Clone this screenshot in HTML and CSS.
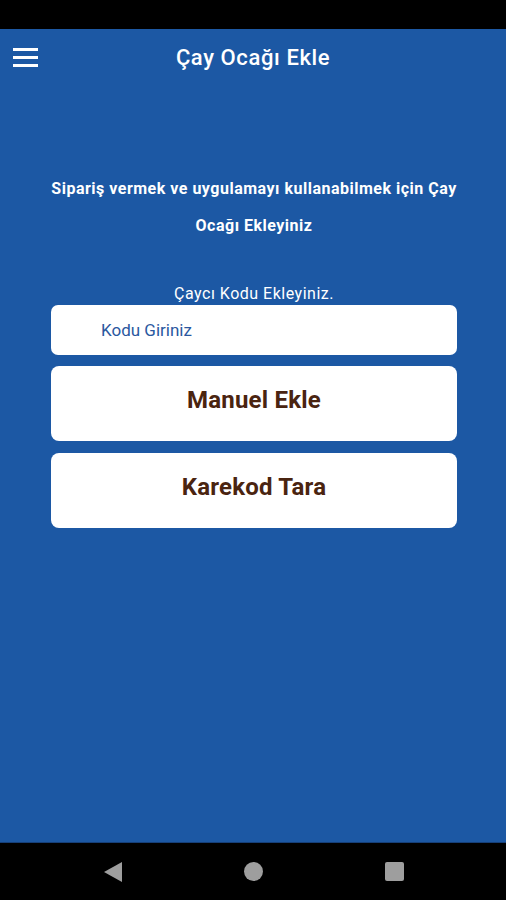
FILE: index.html
```html
<!DOCTYPE html>
<html lang="tr">
<head>
    <meta charset="UTF-8">
    <meta name="viewport" content="width=device-width, initial-scale=1.0">
    <title>Çay Ocağı Ekle</title>
    <link rel="stylesheet" href="styles.css">
</head>
<body>
    <div class="status-bar"></div>

    <div class="screen">
        <header class="toolbar">
            <button class="menu-btn" aria-label="Menü">
                <span></span><span></span><span></span>
            </button>
            <h1>Çay Ocağı Ekle</h1>
        </header>

        <main class="content">
            <p class="intro">Sipariş vermek ve uygulamayı kullanabilmek için Çay Ocağı Ekleyiniz</p>

            <label class="code-label" for="code">Çaycı Kodu Ekleyiniz.</label>
            <input id="code" class="code-input" type="text" placeholder="Kodu Giriniz">

            <button class="action-btn">Manuel Ekle</button>
            <button class="action-btn">Karekod Tara</button>
        </main>
    </div>

    <nav class="nav-bar">
        <span class="nav-back"></span>
        <span class="nav-home"></span>
        <span class="nav-recent"></span>
    </nav>
</body>
</html>
```

FILE: styles.css
```css
body {
    margin: 0;
    padding: 0;
    height: 100vh;
    display: flex;
    flex-direction: column;
    background: #000;
    font-family: Roboto, "Noto Sans", sans-serif;
    overflow: hidden;
}

.status-bar {
    height: 29px;
    background: #000;
    flex-shrink: 0;
}

.screen {
    flex: 1;
    background: #1c58a4;
    border-bottom: 1px solid #163f78;
    display: flex;
    flex-direction: column;
}

.toolbar {
    height: 56px;
    display: flex;
    align-items: center;
    position: relative;
}

.menu-btn {
    background: none;
    border: 0;
    padding: 0;
    margin-left: 13px;
    width: 25px;
    display: flex;
    flex-direction: column;
    gap: 5px;
    cursor: pointer;
}

.menu-btn span {
    display: block;
    height: 3px;
    background: #fff;
}

.toolbar h1 {
    position: absolute;
    left: 0;
    right: 0;
    margin: 0;
    text-align: center;
    color: #fff;
    font-size: 22px;
    font-weight: 500;
    letter-spacing: 0.6px;
    pointer-events: none;
}

.content {
    padding: 0 49px 0 51px;
    display: flex;
    flex-direction: column;
}

.intro {
    margin: 85px -4px 0;
    color: #fff;
    font-size: 16px;
    font-weight: 700;
    letter-spacing: 0.5px;
    line-height: 37px;
    text-align: center;
}

.code-label {
    margin-top: 40px;
    color: #fff;
    font-size: 16px;
    letter-spacing: 0.5px;
    text-align: center;
    line-height: 20px;
}

.code-input {
    margin-top: 1px;
    height: 50px;
    box-sizing: border-box;
    border: 0;
    border-radius: 7px;
    padding: 0 0 0 50px;
    font-family: inherit;
    font-size: 17px;
    color: #2a58a0;
    background: #fff;
    outline: none;
}

.code-input::placeholder {
    color: #2a58a0;
}

.action-btn {
    margin-top: 11px;
    height: 75px;
    padding: 0 0 7px;
    border: 0;
    border-radius: 8px;
    background: #fff;
    color: #4a2410;
    font-family: inherit;
    font-size: 24px;
    font-weight: 700;
    letter-spacing: 0.2px;
    cursor: pointer;
}

.action-btn + .action-btn {
    margin-top: 12px;
}

.nav-bar {
    height: 57px;
    flex-shrink: 0;
    background: #000;
    display: flex;
    justify-content: center;
    align-items: center;
    gap: 122px;
    padding-left: 2px;
}

.nav-back {
    width: 0;
    height: 0;
    border-top: 10px solid transparent;
    border-bottom: 10px solid transparent;
    border-right: 18px solid #9e9e9e;
}

.nav-home {
    width: 19px;
    height: 19px;
    border-radius: 50%;
    background: #9e9e9e;
}

.nav-recent {
    width: 19px;
    height: 19px;
    border-radius: 2px;
    background: #9e9e9e;
}
```
